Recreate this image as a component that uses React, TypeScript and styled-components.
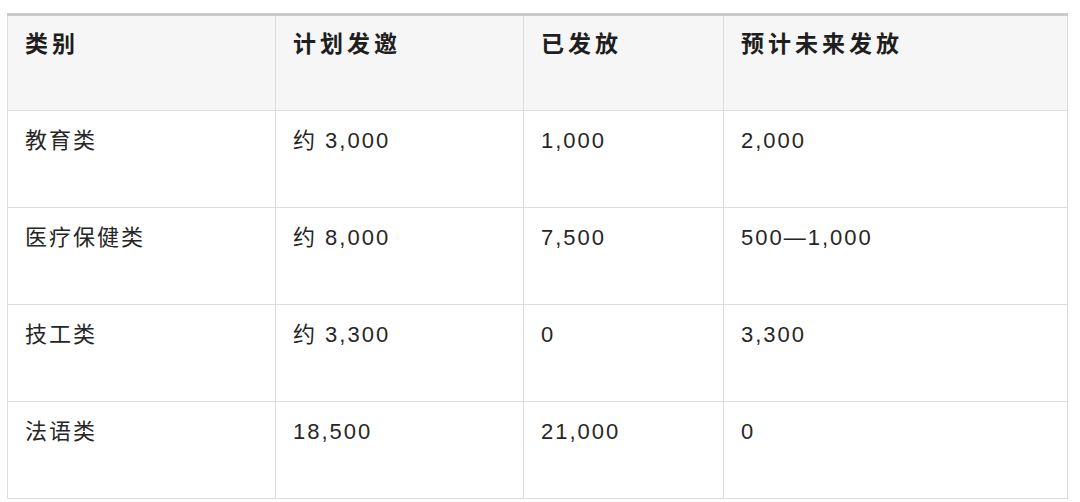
import React from 'react'
import styled, { createGlobalStyle } from 'styled-components'

const GlobalStyle = createGlobalStyle`
  html, body {
    margin: 0;
    padding: 0;
    background: #ffffff;
  }
  body {
    font-family: "Liberation Sans", "Noto Sans CJK SC", sans-serif;
    color: #222222;
  }
`

const Page = styled.div`
  padding: 13px 13px 0 7px;
`

const Table = styled.table`
  width: 1060px;
  border-collapse: collapse;
  table-layout: fixed;
  border-top: 3px solid #cacaca;
`

const Col = styled.col<{ $w: number }>`
  width: ${(p) => p.$w}px;
`

const HeadCell = styled.th`
  height: 82px;
  padding: 12px 17px 0;
  vertical-align: top;
  text-align: left;
  background: #f6f6f6;
  border: 1px solid #dddddd;
  border-top: none;
  font-size: 23px;
  line-height: 33px;
  font-weight: 700;
  letter-spacing: 4px;
  color: #1e1e1e;
`

const Cell = styled.td`
  height: 83px;
  padding: 13px 17px 0;
  vertical-align: top;
  border: 1px solid #dddddd;
  font-size: 22px;
  line-height: 33px;
  letter-spacing: 2px;
  color: #262626;
`

const columns = [
  { title: '类别', width: 268 },
  { title: '计划发邀', width: 248 },
  { title: '已发放', width: 200 },
  { title: '预计未来发放', width: 344 },
]

const rows = [
  ['教育类', '约 3,000', '1,000', '2,000'],
  ['医疗保健类', '约 8,000', '7,500', '500—1,000'],
  ['技工类', '约 3,300', '0', '3,300'],
  ['法语类', '18,500', '21,000', '0'],
]

export default function App() {
  return (
    <>
      <GlobalStyle />
      <Page>
        <Table>
          <colgroup>
            {columns.map((c) => (
              <Col key={c.title} $w={c.width} />
            ))}
          </colgroup>
          <thead>
            <tr>
              {columns.map((c) => (
                <HeadCell key={c.title}>{c.title}</HeadCell>
              ))}
            </tr>
          </thead>
          <tbody>
            {rows.map((row) => (
              <tr key={row[0]}>
                {row.map((v, i) => (
                  <Cell key={i}>{v}</Cell>
                ))}
              </tr>
            ))}
          </tbody>
        </Table>
      </Page>
    </>
  )
}
